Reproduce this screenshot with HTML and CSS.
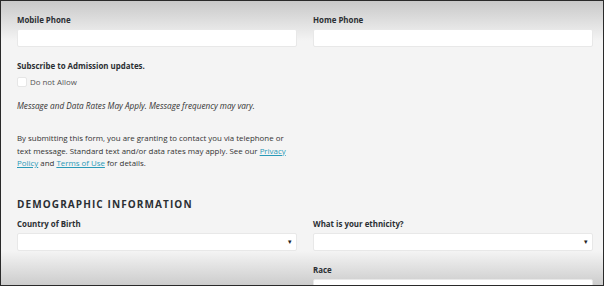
FILE: index.html
```html
<!DOCTYPE html>
<html>
<head>
<meta charset="utf-8">
<link rel="stylesheet" href="styles.css">
</head>
<body>
<div class="frame">
  <div class="row two">
    <div class="field">
      <div class="label">Mobile Phone</div>
      <div class="input"></div>
    </div>
    <div class="field">
      <div class="label">Home Phone</div>
      <div class="input"></div>
    </div>
  </div>
  <div class="label sub">Subscribe to Admission updates.</div>
  <div class="check"><span class="box"></span><span>Do not Allow</span></div>
  <p class="italic">Message and Data Rates May Apply. Message frequency may vary.</p>
  <p class="para">By submitting this form, you are granting to contact you via telephone or text message. Standard text and/or data rates may apply. See our <a href="#">Privacy Policy</a> and <a href="#">Terms of Use</a> for details.</p>
  <h2 class="heading">DEMOGRAPHIC INFORMATION</h2>
  <div class="row two">
    <div class="field">
      <div class="label">Country of Birth</div>
      <div class="input select"><span class="arrow">&#9662;</span></div>
    </div>
    <div class="field">
      <div class="label">What is your ethnicity?</div>
      <div class="input select"><span class="arrow">&#9662;</span></div>
      <div class="label race">Race</div>
      <div class="input"></div>
    </div>
  </div>
</div>
</body>
</html>
```
FILE: styles.css
```css
html, body { margin: 0; padding: 0; }
body { width: 604px; height: 286px; overflow: hidden; background: #f4f4f4; }
.frame {
  position: relative;
  box-sizing: border-box;
  width: 604px; height: 286px;
  border: 1px solid #2a2a2a;
  background:
    linear-gradient(#c9c9c9 0px, rgba(244,244,244,0) 40px),
    linear-gradient(to top, rgba(200,200,200,0.9) 0px, rgba(244,244,244,0) 34px),
    #f4f4f4;
  padding: 13px 10px 0 16px;
  font-family: "Open Sans", sans-serif;
  color: #333;
  overflow: hidden;
}
.row.two { display: grid; grid-template-columns: 280px 280px; column-gap: 16px; }
.label { font-weight: 700; font-size: 7.9px; line-height: 12px; color: #2b2f33; }
.input {
  height: 18px; margin-top: 3px;
  background: #fff; border: 1px solid #e8e8e8; border-radius: 2px;
  box-sizing: border-box; position: relative;
}
.select .arrow { position: absolute; right: 4px; top: 2px; font-size: 7px; color: #222; line-height: 12px; }
.sub { margin-top: 13px; }
.check { display: flex; align-items: center; gap: 3px; margin-top: 4px; font-size: 7.9px; line-height: 12px; color: #555; }
.box { width: 8px; height: 8px; background: #fff; border: 1px solid #e6e6e6; border-radius: 2px; margin-left: 0; }
.italic { font-style: italic; font-size: 8.2px; line-height: 12px; margin: 12px 0 0; color: #333; }
.para { font-size: 7.9px; line-height: 12.5px; margin: 20px 0 0; width: 280px; color: #333; }
.para a { color: #2a9ab8; }
.heading { font-size: 10px; font-weight: 700; letter-spacing: 1.1px; margin: 27px 0 0; line-height: 14px; color: #2b2f33; }
.heading + .row { margin-top: 7px; }
.race { margin-top: 13px; }
```
